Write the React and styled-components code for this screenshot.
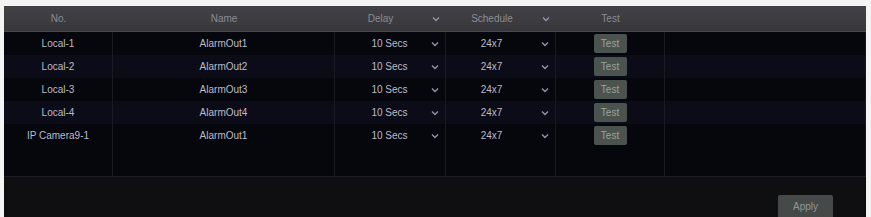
import React from 'react';
import styled, { createGlobalStyle } from 'styled-components';

const GlobalStyle = createGlobalStyle`
  html, body {
    margin: 0;
    padding: 0;
    background: #f4f4f4;
  }
  body {
    font-family: 'Liberation Sans', Arial, sans-serif;
  }
`;

const rows = [
  { no: 'Local-1', name: 'AlarmOut1' },
  { no: 'Local-2', name: 'AlarmOut2' },
  { no: 'Local-3', name: 'AlarmOut3' },
  { no: 'Local-4', name: 'AlarmOut4' },
  { no: 'IP Camera9-1', name: 'AlarmOut1' },
];

const cols = '109px 222px 111px 110px 109px 1fr';

const Chevron = () => (
  <svg width='8' height='6' viewBox='0 0 8 6'>
    <path d='M1 1.5 L4 4.5 L7 1.5' fill='none' stroke='#8d96a8' strokeWidth='1.4' />
  </svg>
);

const App = () => {
  return (
    <>
      <GlobalStyle />
      <Page>
        <Panel>
          <Table>
            <HeadRow>
              <HeadCell>No.</HeadCell>
              <HeadCell>Name</HeadCell>
              <HeadCell select lead={0} trail={6}>
                <span>Delay</span>
                <Chevron />
              </HeadCell>
              <HeadCell select lead={0} trail={4}>
                <span>Schedule</span>
                <Chevron />
              </HeadCell>
              <HeadCell>Test</HeadCell>
              <HeadCell />
            </HeadRow>
            <Body>
              {rows.map((r, i) => (
                <Row key={i} alt={i % 2 === 1}>
                  <Cell>{r.no}</Cell>
                  <Cell>{r.name}</Cell>
                  <Cell select lead={13} trail={0}>
                    <span>10 Secs</span>
                    <Chevron />
                  </Cell>
                  <Cell select lead={0} trail={4}>
                    <span>24x7</span>
                    <Chevron />
                  </Cell>
                  <Cell>
                    <TestButton>Test</TestButton>
                  </Cell>
                  <Cell />
                </Row>
              ))}
              <Filler>
                {[0, 1, 2, 3, 4, 5].map((c) => (
                  <Cell key={c} />
                ))}
              </Filler>
            </Body>
          </Table>
          <Footer>
            <ApplyButton>Apply</ApplyButton>
          </Footer>
        </Panel>
      </Page>
    </>
  );
};

const Page = styled.div`
  padding: 6px 5px 0 4px;
  height: 217px;
  box-sizing: border-box;
`;

const Panel = styled.div`
  background: #0f0f11;
  height: 211px;
  display: flex;
  flex-direction: column;
`;

const Table = styled.div`
  display: flex;
  flex-direction: column;
  background: #06060d;
  border-bottom: 1px solid #1d1d26;
`;

const HeadRow = styled.div`
  display: grid;
  grid-template-columns: ${cols};
  height: 25px;
  background: linear-gradient(#414146, #37373c);
  border-bottom: 1px solid #48484e;
`;

const HeadCell = styled.div`
  display: flex;
  align-items: center;
  justify-content: center;
  padding: ${(p) => (p.select ? `0 6px 0 ${p.lead}px` : '0')};
  color: #8c8c93;
  font-size: 10px;

  span {
    flex: 1;
    text-align: center;
    padding-right: ${(p) => p.trail || 0}px;
  }
`;

const Body = styled.div`
  display: flex;
  flex-direction: column;
`;

const Row = styled.div`
  display: grid;
  grid-template-columns: ${cols};
  height: 23px;
  background: ${(p) => (p.alt ? '#0c0c18' : '#06060d')};
`;

const Filler = styled.div`
  display: grid;
  grid-template-columns: ${cols};
  height: 29px;
`;

const Cell = styled.div`
  display: flex;
  align-items: center;
  justify-content: center;
  padding: ${(p) => (p.select ? `0 6px 0 ${p.lead}px` : '0')};
  color: #bcbcc4;
  font-size: 10px;
  border-right: 1px solid #191922;

  span {
    flex: 1;
    text-align: center;
    padding-right: ${(p) => p.trail || 0}px;
  }
`;

const TestButton = styled.div`
  width: 33px;
  height: 19px;
  display: flex;
  align-items: center;
  justify-content: center;
  background: #4b534f;
  border-radius: 2px;
  color: #9aa39e;
  font-size: 10px;
`;

const Footer = styled.div`
  flex: 1;
  display: flex;
  justify-content: flex-end;
  align-items: flex-end;
  padding-right: 33px;
`;

const ApplyButton = styled.div`
  width: 55px;
  height: 22px;
  display: flex;
  align-items: center;
  justify-content: center;
  background: #454a48;
  border-radius: 2px 2px 0 0;
  color: #8f9893;
  font-size: 10px;
`;

export default App;
